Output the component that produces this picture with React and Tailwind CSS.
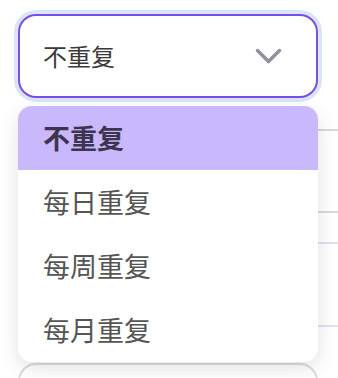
import React, { useState } from "react";

const options = ["不重复", "每日重复", "每周重复", "每月重复"];

function Chevron() {
  return (
    <svg width="27" height="17" viewBox="0 0 27 17" fill="none">
      <polyline
        points="2.5,2.5 13.5,13.5 24.5,2.5"
        stroke="#8f90a0"
        strokeWidth="3.5"
        strokeLinecap="round"
        strokeLinejoin="round"
      />
    </svg>
  );
}

export default function App() {
  const [value, setValue] = useState("不重复");

  return (
    <div
      className="h-[378px] bg-white overflow-hidden"
      style={{ fontFamily: '"Noto Sans CJK SC", "Noto Sans", sans-serif' }}
    >
      <div className="relative pl-[18px] pt-[14px]">
        {/* select trigger */}
        <button className="w-[300px] h-[84px] rounded-[18px] border-2 border-[#7b4fe6] ring-4 ring-[#d8e5fb] bg-white flex items-center justify-between pl-[23px] pr-[34px]">
          <span className="text-[24px] text-[#3a3a3a] leading-none">{value}</span>
          <Chevron />
        </button>

        {/* page content behind the menu */}
        <div>
          <div className="mt-[31px] h-[2px] bg-[#d9d9d9]"></div>
          <div className="mt-[80px] h-[2px] bg-[#d9d9d9]"></div>
          <div className="mt-[29px] h-[2px] bg-[#e2dff0]"></div>
          <div className="mt-[81px] h-[2px] bg-[#e2dff0]"></div>
          <div className="mt-[36px] w-[300px] h-[40px] rounded-[18px] border-2 border-[#dcdcdc]"></div>
        </div>

        {/* dropdown menu */}
        <div className="absolute top-[106px] left-[18px] w-[300px] bg-white rounded-[14px] overflow-hidden shadow-[0_6px_20px_rgba(0,0,0,0.12)]">
          {options.map((opt) => (
            <div
              key={opt}
              onClick={() => setValue(opt)}
              className={
                opt === value
                  ? "h-[64px] flex items-center pl-[25px] bg-[#c9b8fb] text-[#3d3550] font-bold text-[27px]"
                  : "h-[64px] flex items-center pl-[25px] text-[#555555] text-[27px]"
              }
            >
              {opt}
            </div>
          ))}
        </div>
      </div>
    </div>
  );
}
